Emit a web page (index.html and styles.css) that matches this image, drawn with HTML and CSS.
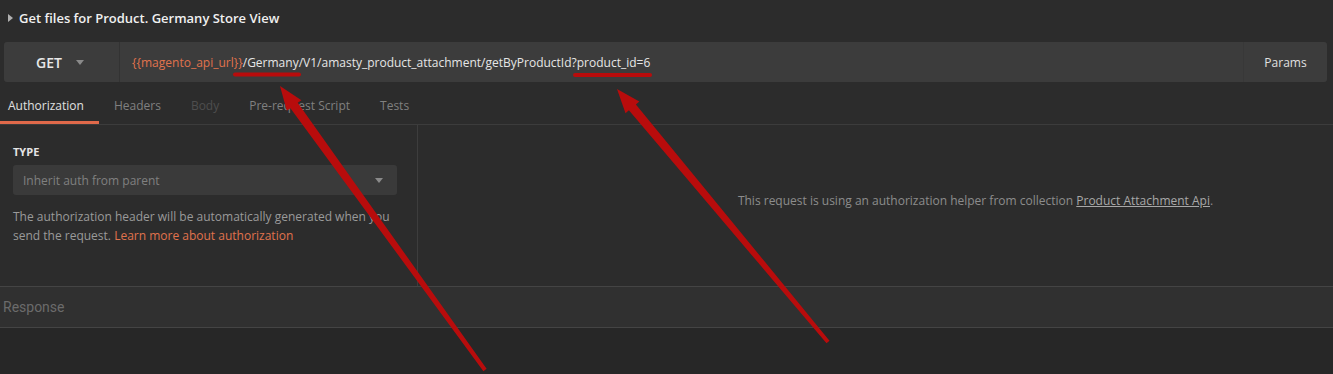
FILE: index.html
```html
<!DOCTYPE html>
<html lang="en">
<head>
  <meta charset="UTF-8">
  <meta name="viewport" content="width=device-width, initial-scale=1">
  <title>Get files for Product. Germany Store View</title>
  <link rel="stylesheet" href="styles.css">
</head>
<body>

<div class="title-row">
  <span class="caret-right"></span>
  <span class="request-name">Get files for Product. Germany Store View</span>
</div>

<div class="url-row">
  <div class="method">GET <span class="caret-down"></span></div>
  <div class="url"><span class="var">{{magento_api_url}}</span>/Germany/V1/amasty_product_attachment/getByProductId?product_id=6</div>
  <div class="params">Params</div>
</div>

<div class="tabs">
  <div class="tab active">Authorization</div>
  <div class="tab">Headers</div>
  <div class="tab disabled">Body</div>
  <div class="tab">Pre-request Script</div>
  <div class="tab">Tests</div>
</div>

<div class="auth">
  <div class="auth-left">
    <div class="label">Type</div>
    <div class="select">
      <span>Inherit auth from parent</span>
      <span class="caret-down"></span>
    </div>
    <p class="help">The authorization header will be automatically generated when you send the request. <a href="#">Learn more about authorization</a></p>
  </div>
  <div class="auth-right">
    <p>This request is using an authorization helper from collection <a href="#">Product Attachment Api</a>.</p>
  </div>
</div>

<div class="response">Response</div>

<!-- annotations drawn over the screenshot -->
<svg class="annotations" width="1333" height="374" viewBox="0 0 1333 374">
  <line x1="235" y1="74.5" x2="299" y2="74.5" stroke="#b80c0c" stroke-width="4" stroke-linecap="round"/>
  <line x1="575" y1="75" x2="650" y2="75" stroke="#b80c0c" stroke-width="4" stroke-linecap="round"/>
  <polygon fill="#b80c0c" points="280,86 301.4,100.2 297.75,102.86 486.6,368.8 483.4,371.2 290.45,108.14 286.8,110.8"/>
  <polygon fill="#b80c0c" points="617,89 639.3,101.6 635.9,104.5 829.5,340.7 826.5,343.3 628.9,110.3 625.5,113.2"/>
</svg>

</body>
</html>
```

FILE: styles.css
```css
body {
  margin: 0;
  background-color: #272727;
  font-family: "Open Sans", Arial, sans-serif;
  font-size: 13px;
  color: #e8e8e8;
  position: relative;
  width: 1333px;
  height: 374px;
  overflow: hidden;
}
.title-row {
  height: 35px;
  display: flex;
  align-items: center;
  padding-left: 8px;
  background-color: #2c2c2c;
}
.caret-right {
  width: 0;
  height: 0;
  border-top: 4px solid transparent;
  border-bottom: 4px solid transparent;
  border-left: 5px solid #b0b0b0;
  margin-right: 6px;
}
.request-name {
  font-weight: 600;
  color: #f0f0f0;
}
.url-row {
  display: flex;
  height: 40px;
  padding: 7px 6px 0 4px;
  background-color: #2c2c2c;
}
.method,
.url,
.params {
  display: flex;
  align-items: center;
  background-color: #3c3c3c;
}
.method {
  width: 83px;
  padding-left: 32px;
  border-right: 1px solid #333;
  border-radius: 3px 0 0 3px;
  font-size: 14px;
  font-weight: 600;
  color: #e8e8e8;
}
.method .caret-down {
  margin-left: 14px;
}
.caret-down {
  width: 0;
  height: 0;
  border-left: 4px solid transparent;
  border-right: 4px solid transparent;
  border-top: 5px solid #8a8a8a;
}
.url {
  flex: 1;
  padding-left: 12px;
  font-size: 12px;
  color: #e6e6e6;
}
.var {
  color: #e0734d;
}
.params {
  width: 83px;
  justify-content: center;
  border-left: 1px solid #383838;
  border-radius: 0 3px 3px 0;
  font-size: 12px;
  color: #e0e0e0;
}
.tabs {
  display: flex;
  height: 42px;
  background-color: #2c2c2c;
  border-bottom: 1px solid #3c3c3c;
}
.tab {
  padding: 9px 15px 0;
  line-height: 30px;
  font-size: 12px;
  border-bottom: 3px solid transparent;
  color: #808080;
}
.tab:first-child {
  margin-left: -7px;
}
.tab.active {
  color: #e0e0e0;
  border-bottom-color: #e0694a;
}
.tab.disabled {
  color: #4e4e4e;
}
.auth {
  display: flex;
  height: 161px;
  background-color: #2c2c2c;
}
.auth-left {
  width: 384px;
  padding: 20px 20px 0 13px;
  border-right: 1px solid #3d3d3d;
}
.label {
  font-size: 11px;
  font-weight: 700;
  line-height: 14px;
  text-transform: uppercase;
  color: #e4e4e4;
}
.select {
  display: flex;
  align-items: center;
  justify-content: space-between;
  height: 30px;
  margin-top: 6px;
  padding: 0 14px 0 10px;
  background-color: #3a3a3a;
  border-radius: 3px;
  font-size: 12px;
  color: #808080;
}
.help {
  margin: 12px 0 0;
  line-height: 19px;
  font-size: 12px;
  color: #9a9a9a;
}
.help a {
  color: #e0734d;
  text-decoration: none;
}
.auth-right {
  flex: 1;
  display: flex;
  align-items: center;
  justify-content: center;
  padding: 0 0 11px 200px;
}
.auth-right p {
  margin: 0;
  font-size: 12px;
  color: #8c8c8c;
}
.auth-right a {
  color: #a8a8a8;
}
.response {
  height: 40px;
  line-height: 40px;
  padding-left: 3px;
  background-color: #303030;
  border-top: 1px solid #444;
  border-bottom: 1px solid #444;
  font-family: Roboto, Arial, sans-serif;
  font-size: 14px;
  color: #6b6b6b;
}
.annotations {
  position: absolute;
  top: 0;
  left: 0;
  pointer-events: none;
}
```
